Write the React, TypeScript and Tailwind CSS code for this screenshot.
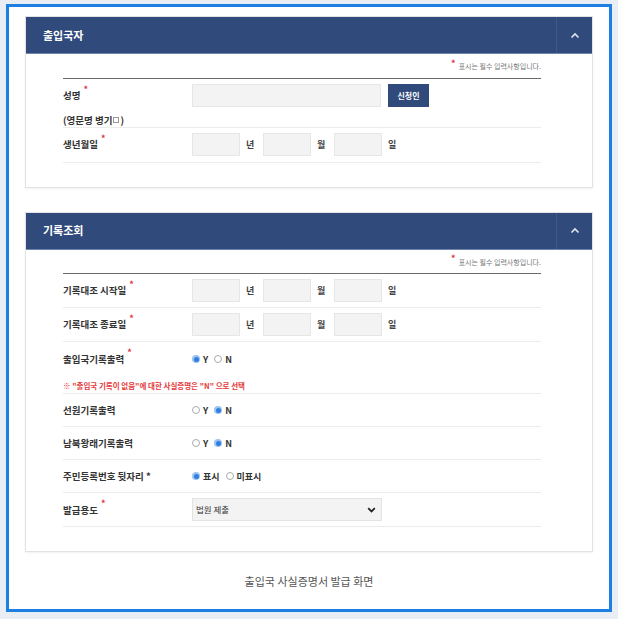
import React from "react";

const FONT = { fontFamily: '"Noto Sans CJK KR", "Noto Sans", sans-serif' };

function Star() {
  return <span className="relative -top-[6px] ml-[3px] text-[9px] leading-none font-bold text-[#e0303a]">*</span>;
}

function Header({ title }: { title: string }) {
  return (
    <div className="flex h-[37px] items-stretch bg-[#2f4a7b] border-b border-[#6d86b0]">
      <div className="flex flex-1 items-center pl-[17px] text-[11px] font-bold text-white">{title}</div>
      <div className="flex w-[36px] items-center justify-center border-l border-[#3f5a8a]">
        <svg width="10" height="7" viewBox="0 0 10 7" fill="none">
          <path d="M1.5 5.5L5 2L8.5 5.5" stroke="#dfe6f2" strokeWidth="1.6" />
        </svg>
      </div>
    </div>
  );
}

function Note() {
  return (
    <div className="flex items-center justify-end pt-[7px] pb-[6px] text-[7px] text-[#777]">
      <span className="relative -top-[3px] mr-[3px] text-[9px] leading-none font-bold text-[#e0303a]">*</span>
      <span>표시는 필수 입력사항입니다.</span>
    </div>
  );
}

function DateInputs() {
  return (
    <div className="flex items-center text-[9px] font-semibold text-[#444]">
      <div className="h-[23px] w-[48px] border border-[#e6e6e6] bg-[#f3f3f3]" />
      <span className="ml-[6px] w-[17px]">년</span>
      <div className="h-[23px] w-[48px] border border-[#e6e6e6] bg-[#f3f3f3]" />
      <span className="ml-[6px] w-[17px]">월</span>
      <div className="h-[23px] w-[48px] border border-[#e6e6e6] bg-[#f3f3f3]" />
      <span className="ml-[6px]">일</span>
    </div>
  );
}

function Radio({ on, label }: { on: boolean; label: string }) {
  return (
    <span className="mr-[6px] flex items-center">
      {on ? (
        <span className="mr-[3px] flex h-[8px] w-[8px] items-center justify-center rounded-full bg-[#9cc3f0]">
          <span className="h-[5px] w-[5px] rounded-full bg-[#2f7fe0]" />
        </span>
      ) : (
        <span className="mr-[3px] h-[8px] w-[8px] rounded-full border border-[#aaa] bg-white" />
      )}
      <span className="text-[9px] font-bold text-[#333]">{label}</span>
    </span>
  );
}

function Row({ label, star, children, h = "h-[33px]" }: { label: string; star?: boolean; children?: React.ReactNode; h?: string }) {
  return (
    <div className={`flex ${h} items-center border-b border-[#ececec]`}>
      <div className="flex w-[129px] items-center text-[9.5px] font-semibold text-[#333]">
        {label}
        {star && <Star />}
      </div>
      <div className="flex items-center">{children}</div>
    </div>
  );
}

export default function App() {
  return (
    <div style={FONT} className="min-h-[619px] w-[618px] bg-[#e9eef4] pt-[4px] pl-[6px] pr-[6px] pb-[7px]">
      <div className="h-[608px] border-[3px] border-[#1d7fe2] bg-white px-[16px] pt-[9px]">
        {/* Section 1 */}
        <div className="border border-[#e3e3e3] bg-white shadow-[0_1px_2px_rgba(0,0,0,0.06)]">
          <Header title="출입국자" />
          <div className="pl-[37px] pr-[51px] pb-[24px]">
            <Note />
            <div className="border-t-[1.5px] border-[#6b6b6b]">
              <div className="flex h-[34px] items-center">
                <div className="flex w-[129px] items-center text-[9.5px] font-semibold text-[#333]">
                  성명
                  <Star />
                </div>
                <div className="h-[23px] w-[189px] border border-[#e6e6e6] bg-[#f3f3f3]" />
                <div className="ml-[7px] flex h-[23px] w-[41px] items-center justify-center bg-[#2f4a7b] text-[8px] font-bold text-white">
                  신청인
                </div>
              </div>
              <div className="flex h-[15px] items-start border-b border-[#ececec] text-[9.5px] font-semibold text-[#333]">
                (영문명 병기
                <span className="mx-[1px] mt-[4px] inline-block h-[6px] w-[6px] border border-[#999]" />
                )
              </div>
              <Row label="생년월일" star h="h-[35px]">
                <DateInputs />
              </Row>
            </div>
          </div>
        </div>

        {/* Section 2 */}
        <div className="mt-[24px] border border-[#e3e3e3] bg-white shadow-[0_1px_2px_rgba(0,0,0,0.06)]">
          <Header title="기록조회" />
          <div className="pl-[37px] pr-[51px] pb-[24px]">
            <Note />
            <div className="border-t-[1.5px] border-[#6b6b6b]">
              <Row label="기록대조 시작일" star h="h-[34px]">
                <DateInputs />
              </Row>
              <Row label="기록대조 종료일" star h="h-[34px]">
                <DateInputs />
              </Row>
              <div className="border-b border-[#ececec] pb-[2px]">
                <div className="flex h-[26px] items-end pb-[2px]">
                  <div className="flex w-[129px] items-center text-[9.5px] font-semibold text-[#333]">
                    출입국기록출력
                    <Star />
                  </div>
                  <div className="flex items-center">
                    <Radio on label="Y" />
                    <Radio on={false} label="N" />
                  </div>
                </div>
                <div className="mt-[12px] text-[7.5px] font-bold text-[#e53a3a]">
                  ※ "출입국 기록이 없음"에 대한 사실증명은 "N" 으로 선택
                </div>
              </div>
              <Row label="선원기록출력">
                <Radio on={false} label="Y" />
                <Radio on label="N" />
              </Row>
              <Row label="남북왕래기록출력">
                <Radio on={false} label="Y" />
                <Radio on label="N" />
              </Row>
              <Row label="주민등록번호 뒷자리 *">
                <Radio on label="표시" />
                <Radio on={false} label="미표시" />
              </Row>
              <Row label="발급용도" star h="h-[34px]">
                <div className="flex h-[23px] w-[190px] items-center justify-between border border-[#e3e3e3] bg-[#f3f3f3] pl-[3px] pr-[5px] text-[8.5px] text-[#333]">
                  <span>법원 제출</span>
                  <svg width="9" height="6" viewBox="0 0 9 6" fill="none">
                    <path d="M1.2 1.2L4.5 4.5L7.8 1.2" stroke="#222" strokeWidth="1.8" />
                  </svg>
                </div>
              </Row>
            </div>
          </div>
        </div>

        <div className="mt-[21px] text-center text-[11px] text-[#555]">출입국 사실증명서 발급 화면</div>
      </div>
    </div>
  );
}
